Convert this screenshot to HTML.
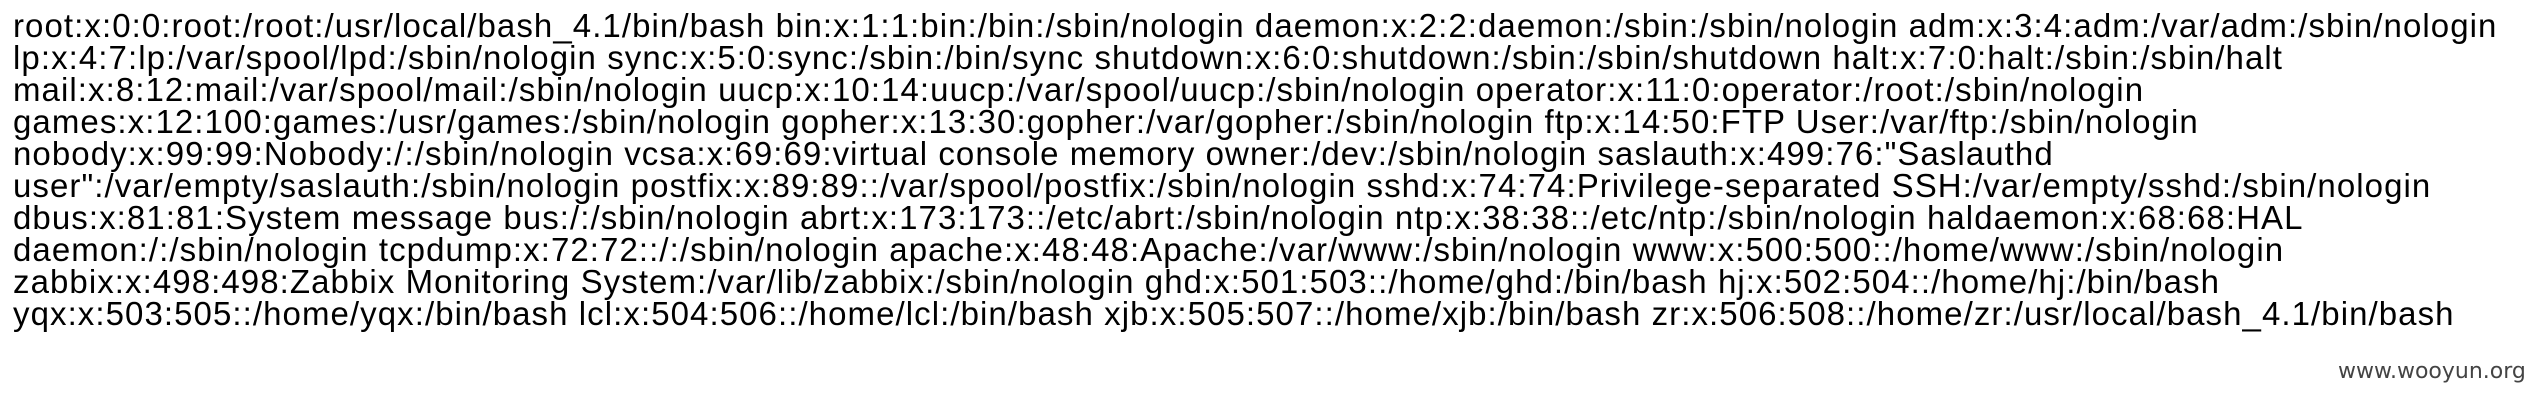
<!DOCTYPE html>
<html><head><meta charset="utf-8"><style>
html,body{margin:0;padding:0;background:#fff;width:2544px;height:402px;overflow:hidden;position:relative}
.t{position:absolute;left:13px;top:10px;font-family:"Liberation Sans",sans-serif;font-size:33px;line-height:32px;color:#000;white-space:pre;letter-spacing:1.07px}
.w{position:absolute;left:2338px;top:361px;font-family:"DejaVu Sans","Liberation Sans",sans-serif;font-size:22px;line-height:22.5px;color:#444}
</style></head><body>
<div class="t">root:x:0:0:root:/root:/usr/local/bash_4.1/bin/bash bin:x:1:1:bin:/bin:/sbin/nologin daemon:x:2:2:daemon:/sbin:/sbin/nologin adm:x:3:4:adm:/var/adm:/sbin/nologin
lp:x:4:7:lp:/var/spool/lpd:/sbin/nologin sync:x:5:0:sync:/sbin:/bin/sync shutdown:x:6:0:shutdown:/sbin:/sbin/shutdown halt:x:7:0:halt:/sbin:/sbin/halt
mail:x:8:12:mail:/var/spool/mail:/sbin/nologin uucp:x:10:14:uucp:/var/spool/uucp:/sbin/nologin operator:x:11:0:operator:/root:/sbin/nologin
games:x:12:100:games:/usr/games:/sbin/nologin gopher:x:13:30:gopher:/var/gopher:/sbin/nologin ftp:x:14:50:FTP User:/var/ftp:/sbin/nologin
nobody:x:99:99:Nobody:/:/sbin/nologin vcsa:x:69:69:virtual console memory owner:/dev:/sbin/nologin saslauth:x:499:76:"Saslauthd
user":/var/empty/saslauth:/sbin/nologin postfix:x:89:89::/var/spool/postfix:/sbin/nologin sshd:x:74:74:Privilege-separated SSH:/var/empty/sshd:/sbin/nologin
dbus:x:81:81:System message bus:/:/sbin/nologin abrt:x:173:173::/etc/abrt:/sbin/nologin ntp:x:38:38::/etc/ntp:/sbin/nologin haldaemon:x:68:68:HAL
daemon:/:/sbin/nologin tcpdump:x:72:72::/:/sbin/nologin apache:x:48:48:Apache:/var/www:/sbin/nologin www:x:500:500::/home/www:/sbin/nologin
zabbix:x:498:498:Zabbix Monitoring System:/var/lib/zabbix:/sbin/nologin ghd:x:501:503::/home/ghd:/bin/bash hj:x:502:504::/home/hj:/bin/bash
yqx:x:503:505::/home/yqx:/bin/bash lcl:x:504:506::/home/lcl:/bin/bash xjb:x:505:507::/home/xjb:/bin/bash zr:x:506:508::/home/zr:/usr/local/bash_4.1/bin/bash</div>
<div class="w">www.wooyun.org</div>
</body></html>
